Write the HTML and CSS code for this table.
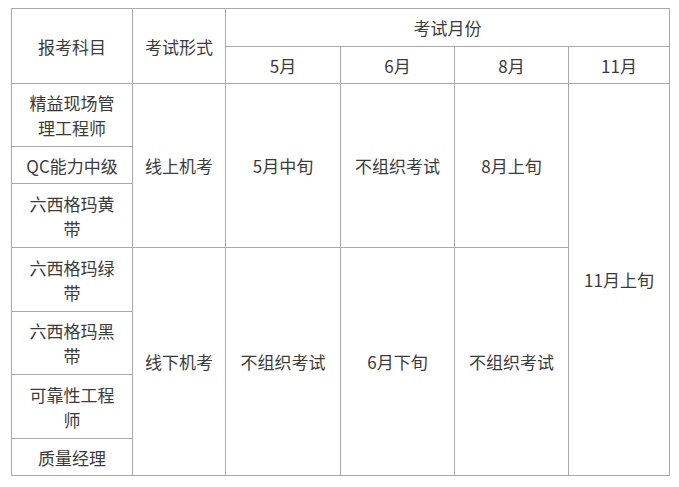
FILE: index.html
```html
<!DOCTYPE html>
<html lang="zh">
<head>
<meta charset="utf-8">
<link rel="stylesheet" href="styles.css">
</head>
<body>
<table class="exam">
  <colgroup>
    <col class="c1"><col class="c2"><col class="c3"><col class="c4"><col class="c5"><col class="c6">
  </colgroup>
  <tr class="h38">
    <td rowspan="2">报考科目</td>
    <td rowspan="2">考试形式</td>
    <td colspan="4">考试月份</td>
  </tr>
  <tr class="h37">
    <td>5月</td><td>6月</td><td>8月</td><td>11月</td>
  </tr>
  <tr class="h63">
    <td>精益现场管理工程师</td>
    <td rowspan="3">线上机考</td>
    <td rowspan="3">5月中旬</td>
    <td rowspan="3">不组织考试</td>
    <td rowspan="3">8月上旬</td>
    <td rowspan="7">11月上旬</td>
  </tr>
  <tr class="h37"><td>QC能力中级</td></tr>
  <tr class="h64"><td>六西格玛黄带</td></tr>
  <tr class="h64">
    <td>六西格玛绿带</td>
    <td rowspan="4">线下机考</td>
    <td rowspan="4">不组织考试</td>
    <td rowspan="4">6月下旬</td>
    <td rowspan="4">不组织考试</td>
  </tr>
  <tr class="h63"><td>六西格玛黑带</td></tr>
  <tr class="h64"><td>可靠性工程师</td></tr>
  <tr class="h37"><td>质量经理</td></tr>
</table>
</body>
</html>
```

FILE: styles.css
```css
html, body {
  margin: 0;
  padding: 0;
  background: #ffffff;
}
body {
  padding: 8px 0 0 11px;
  font-family: "Noto Sans CJK SC", "Noto Sans", sans-serif;
  font-size: 17px;
  color: #3b3b3b;
}
.exam {
  border-collapse: collapse;
  table-layout: fixed;
  width: 659px;
}
.exam td {
  border: 1px solid #a9a9a9;
  text-align: center;
  vertical-align: middle;
  line-height: 25px;
  padding: 0 11px;
}
.c1 { width: 121px; }
.c2 { width: 93px; }
.c3 { width: 115px; }
.c4 { width: 114px; }
.c5 { width: 114px; }
.c6 { width: 101px; }
.h37 { height: 37px; }
.h38 { height: 38px; }
.h63 { height: 63px; }
.h64 { height: 64px; }
```
